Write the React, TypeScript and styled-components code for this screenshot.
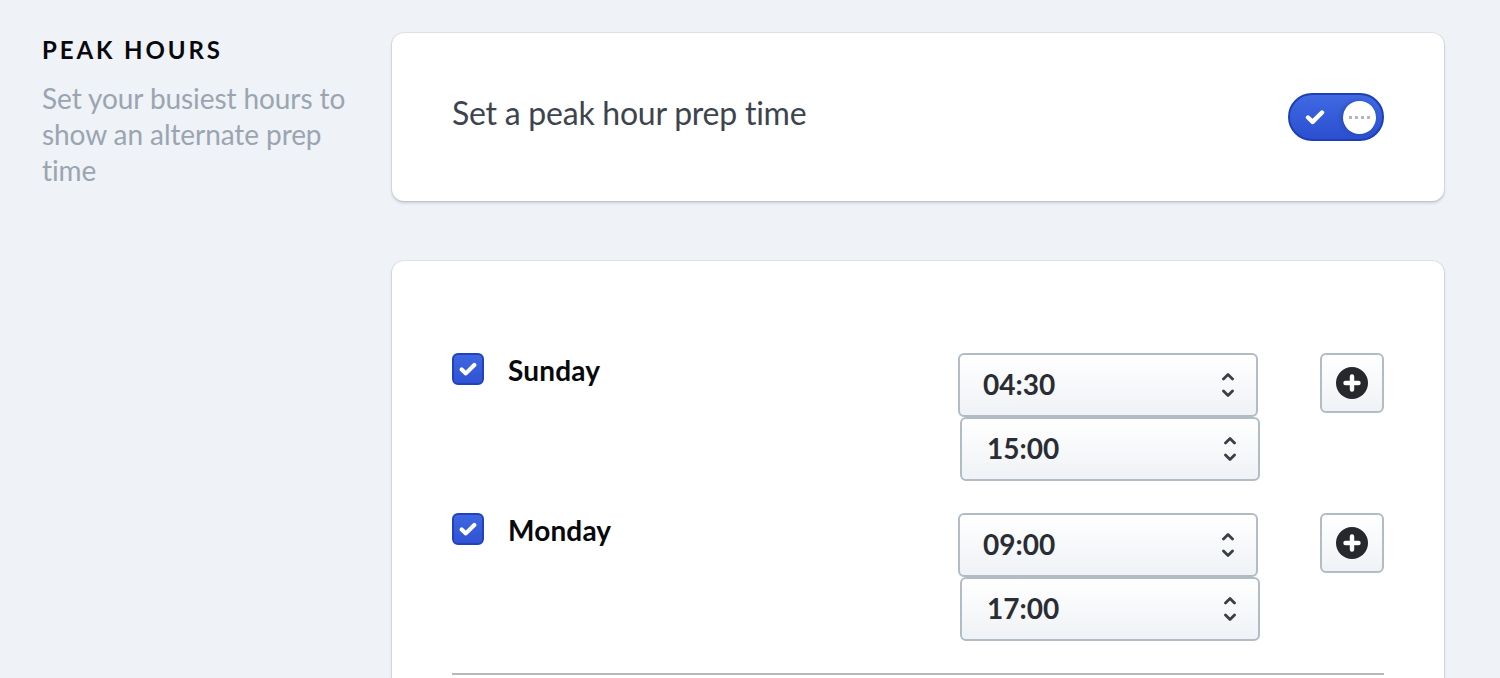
import React from 'react';
import styled, { createGlobalStyle } from 'styled-components';

const GlobalStyle = createGlobalStyle`
  html, body {
    margin: 0;
    height: 100%;
    overflow: hidden;
    background: #eff2f7;
    font-family: Lato, "Open Sans", sans-serif;
    font-variant-ligatures: none;
  }
`;

const Page = styled.div`
  display: flex;
  align-items: flex-start;
  height: 678px;
  overflow: hidden;
  padding: 33px 56px 0 42px;
  box-sizing: border-box;
`;

const Aside = styled.div`
  flex: 0 0 350px;
`;

const Heading = styled.h2`
  margin: 4px 0 0;
  font-size: 24px;
  line-height: 26px;
  font-weight: 700;
  letter-spacing: 2.9px;
  color: #07090c;
`;

const Description = styled.p`
  margin: 17px 0 0;
  width: 310px;
  font-size: 28px;
  line-height: 36px;
  letter-spacing: -0.08px;
  color: #9aa5b1;
`;

const Main = styled.div`
  flex: 1;
  display: flex;
  flex-direction: column;
  gap: 60px;
`;

const Card = styled.section`
  background: #fff;
  border-radius: 12px;
  box-shadow: 0 0 0 1px rgba(120, 130, 150, 0.14), 0 2px 3px rgba(70, 80, 100, 0.24);
  padding: 60px 60px 0;
`;

const ToggleCard = styled(Card)`
  height: 168px;
  box-sizing: border-box;
`;

const ToggleRow = styled.div`
  display: flex;
  align-items: flex-start;
  justify-content: space-between;
`;

const ToggleLabel = styled.span`
  margin-top: -1px;
  font-size: 32px;
  line-height: 42px;
  letter-spacing: -0.24px;
  color: #3e444e;
`;

const Toggle = styled.div`
  width: 96px;
  height: 48px;
  box-sizing: border-box;
  display: flex;
  align-items: center;
  justify-content: space-between;
  padding: 0 6px 0 15px;
  border: 2px solid #1c3fb5;
  border-radius: 24px;
  background: linear-gradient(180deg, #4069e2, #2b4fd0);
`;

const Knob = styled.div`
  width: 33px;
  height: 33px;
  border-radius: 50%;
  background: #fff;
  display: flex;
  align-items: center;
  justify-content: center;
  gap: 3px;
  box-shadow: -2px 0 4px rgba(20, 40, 110, 0.3);
`;

const KnobDot = styled.span`
  width: 3px;
  height: 3px;
  background: #b4b8bd;
`;

const ScheduleCard = styled(Card)`
  padding-top: 92px;
  height: 460px;
  box-sizing: border-box;
`;

const DayList = styled.div`
  display: flex;
  flex-direction: column;
  gap: 32px;
`;

const DayRow = styled.div`
  display: flex;
  align-items: flex-start;
`;

const Check = styled.div`
  width: 32px;
  height: 32px;
  box-sizing: border-box;
  border: 2px solid #1f43bd;
  border-radius: 6px;
  background: linear-gradient(180deg, #3f67e0, #2f53d4);
  display: flex;
  align-items: center;
  justify-content: center;
`;

const DayName = styled.span`
  flex: 1;
  margin: -1px 0 0 24px;
  font-size: 28px;
  line-height: 36px;
  font-weight: 700;
  letter-spacing: 0.15px;
  color: #07090c;
`;

const Selects = styled.div`
  display: flex;
  flex-direction: column;
  width: 302px;
`;

const Select = styled.div<{ $second?: boolean }>`
  width: 300px;
  height: 64px;
  box-sizing: border-box;
  margin-left: ${(p) => (p.$second ? '2px' : '0')};
  padding: 0 22px 0 ${(p) => (p.$second ? '25px' : '23px')};
  display: flex;
  align-items: center;
  justify-content: space-between;
  border: 2px solid #b2bcc4;
  border-radius: 6px;
  background: linear-gradient(180deg, #ffffff, #eff2f6);
  font-size: 28px;
  font-weight: 700;
  color: #2a2d33;
`;

const SelectValue = styled.span`
  margin-top: -2px;
`;

const AddButton = styled.button`
  width: 64px;
  height: 60px;
  margin-left: 60px;
  padding: 0;
  border: 2px solid #b2bcc4;
  border-radius: 6px;
  background: linear-gradient(180deg, #ffffff, #eff2f6);
  display: flex;
  align-items: center;
  justify-content: center;
`;

const Divider = styled.hr`
  margin: 32px 0 0;
  border: 0;
  height: 2px;
  background: #b8b8b8;
`;

const CheckMark = ({ size, weight }: { size: number; weight: number }) => (
  <svg width={size} height={size} viewBox="0 0 20 20" fill="none">
    <path d="M3 10.5l4.6 4.4L17 5.5" stroke="#fff" strokeWidth={weight} strokeLinecap="round" strokeLinejoin="round" />
  </svg>
);

const Updown = () => (
  <svg width="12" height="26" viewBox="0 0 12 26" fill="none">
    <path d="M1.5 7L6 2.5 10.5 7M1.5 19L6 23.5 10.5 19" stroke="#3a3e45" strokeWidth="2.8" strokeLinecap="round" strokeLinejoin="round" />
  </svg>
);

const PlusCircle = () => (
  <svg width="32" height="32" viewBox="0 0 32 32">
    <circle cx="16" cy="16" r="16" fill="#26282d" />
    <path d="M16 9.5v13M9.5 16h13" stroke="#fff" strokeWidth="4.4" strokeLinecap="round" />
  </svg>
);

const days = [
  { name: 'Sunday', from: '04:30', to: '15:00' },
  { name: 'Monday', from: '09:00', to: '17:00' },
];

export default function App() {
  return (
    <Page>
      <GlobalStyle />
      <Aside>
        <Heading>PEAK HOURS</Heading>
        <Description>Set your busiest hours to show an alternate prep time</Description>
      </Aside>
      <Main>
        <ToggleCard>
          <ToggleRow>
            <ToggleLabel>Set a peak hour prep time</ToggleLabel>
            <Toggle>
              <CheckMark size={20} weight={4.4} />
              <Knob>
                <KnobDot />
                <KnobDot />
                <KnobDot />
                <KnobDot />
              </Knob>
            </Toggle>
          </ToggleRow>
        </ToggleCard>
        <ScheduleCard>
          <DayList>
            {days.map((day) => (
              <DayRow key={day.name}>
                <Check>
                  <CheckMark size={18} weight={4.6} />
                </Check>
                <DayName>{day.name}</DayName>
                <Selects>
                  <Select>
                    <SelectValue>{day.from}</SelectValue>
                    <Updown />
                  </Select>
                  <Select $second>
                    <SelectValue>{day.to}</SelectValue>
                    <Updown />
                  </Select>
                </Selects>
                <AddButton>
                  <PlusCircle />
                </AddButton>
              </DayRow>
            ))}
          </DayList>
          <Divider />
        </ScheduleCard>
      </Main>
    </Page>
  );
}
